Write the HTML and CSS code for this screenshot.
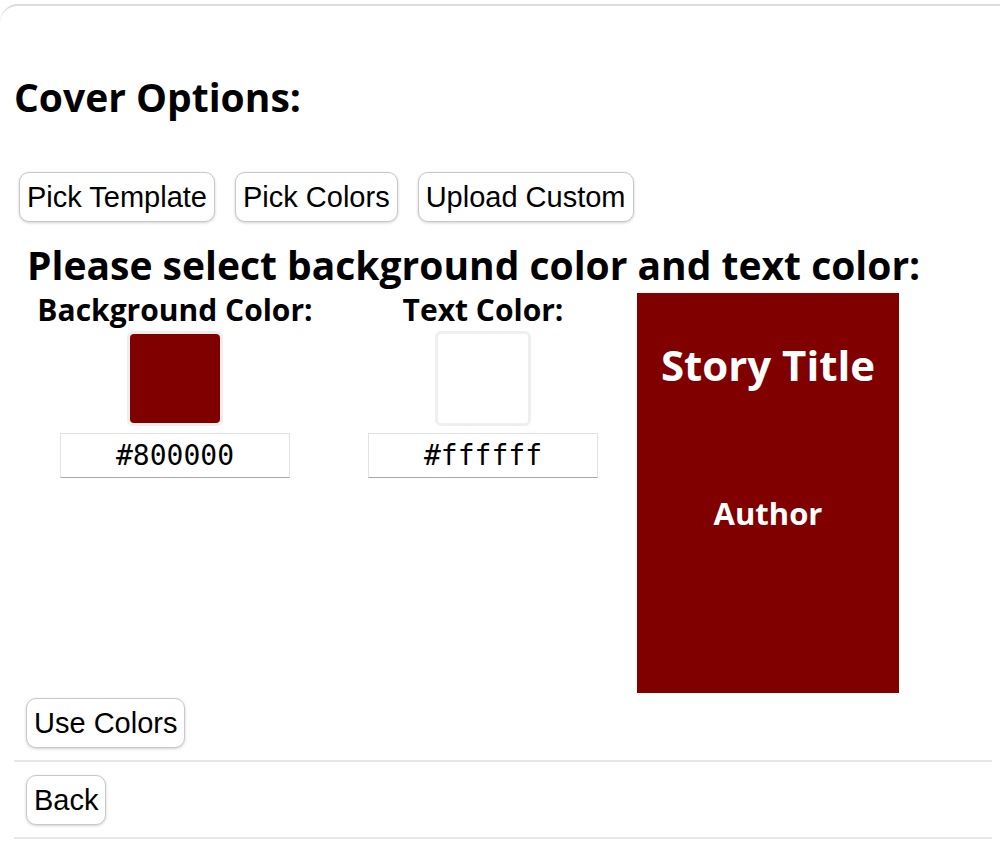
FILE: index.html
```html
<!DOCTYPE html>
<html>
<head>
<meta charset="utf-8">
<link rel="stylesheet" href="styles.css">
</head>
<body>
<div class="card">
  <h2 class="title">Cover Options:</h2>
  <div class="tabs">
    <button class="btn">Pick Template</button>
    <button class="btn">Pick Colors</button>
    <button class="btn">Upload Custom</button>
  </div>
  <div class="section">
    <h3 class="prompt">Please select background color and text color:</h3>
    <div class="picker-row">
      <div class="picker">
        <div class="label">Background Color:</div>
        <div class="swatch"><div class="swatch-fill fill-red"></div></div>
        <div class="hex">#800000</div>
      </div>
      <div class="picker">
        <div class="label">Text Color:</div>
        <div class="swatch"><div class="swatch-fill fill-white"></div></div>
        <div class="hex">#ffffff</div>
      </div>
      <div class="cover">
        <div class="cover-title">Story Title</div>
        <div class="cover-author">Author</div>
      </div>
    </div>
    <div class="use-row">
      <button class="btn">Use Colors</button>
    </div>
  </div>
  <hr class="rule">
  <div class="back-row">
    <button class="btn">Back</button>
  </div>
  <hr class="rule">
</div>
</body>
</html>
```
FILE: styles.css
```css
html, body {
  margin: 0;
  padding: 0;
  background: #fff;
  overflow: hidden;
}
body {
  width: 1000px;
  height: 841px;
}
.card {
  margin-top: 4px;
  margin-right: -20px;
  border-top: 2px solid #dcdcdc;
  border-radius: 18px 18px 0 0;
  padding: 0 0 0 14px;
  height: 900px;
  box-sizing: border-box;
}
.title {
  font-family: "Open Sans", sans-serif;
  font-weight: 700;
  font-size: 39px;
  line-height: 52px;
  margin: 65px 0 0 0;
  color: #000;
}
.tabs {
  display: flex;
  gap: 20px;
  margin: 49px 0 0 5px;
}
.btn {
  font-family: "Liberation Sans", Arial, sans-serif;
  font-size: 29px;
  height: 50px;
  padding: 0 7px;
  background: #fff;
  color: #000;
  border: 1px solid #c8c8c8;
  border-radius: 10px;
  box-shadow: 0 1px 3px rgba(0,0,0,0.18);
  line-height: 48px;
}
.section {
  padding-left: 7px;
}
.prompt {
  font-family: "Open Sans", sans-serif;
  font-weight: 700;
  font-size: 39px;
  line-height: 50px;
  margin: 18px 0 0 6px;
  color: #000;
}
.picker-row {
  display: flex;
  align-items: flex-start;
  margin-top: 0;
}
.picker {
  width: 308px;
  display: flex;
  flex-direction: column;
  align-items: center;
}
.label {
  font-family: "Open Sans", sans-serif;
  font-weight: 700;
  font-size: 30px;
  line-height: 40px;
  color: #000;
}
.swatch {
  width: 96px;
  height: 95px;
  box-sizing: border-box;
  border: 3px solid #efefef;
  border-radius: 6px;
  margin-top: 1px;
  background: #fff;
}
.swatch-fill {
  width: 100%;
  height: 100%;
  border-radius: 4px;
}
.fill-red { background: #800000; }
.fill-white { background: #fff; }
.hex {
  width: 230px;
  height: 45px;
  box-sizing: border-box;
  margin-top: 7px;
  border: 1px solid #e2e2e2;
  border-bottom: 1px solid #a8a8a8;
  font-family: "DejaVu Sans Mono", monospace;
  font-size: 28px;
  line-height: 43px;
  text-align: center;
  color: #000;
}
.cover {
  width: 262px;
  height: 400px;
  background: #800000;
  color: #fff;
  font-family: "Open Sans", sans-serif;
  font-weight: 700;
  text-align: center;
  margin-top: 3px;
}
.cover-title {
  font-size: 42px;
  line-height: 56px;
  margin-top: 44px;
}
.cover-author {
  font-size: 31px;
  line-height: 42px;
  margin-top: 99px;
}
.use-row {
  margin-top: 5px;
  padding-left: 5px;
}
.rule {
  border: 0;
  border-top: 2px solid #e8e8e8;
  margin: 12px 0 0 0;
  width: 978px;
}
.back-row {
  margin-top: 13px;
  padding-left: 12px;
}
```
